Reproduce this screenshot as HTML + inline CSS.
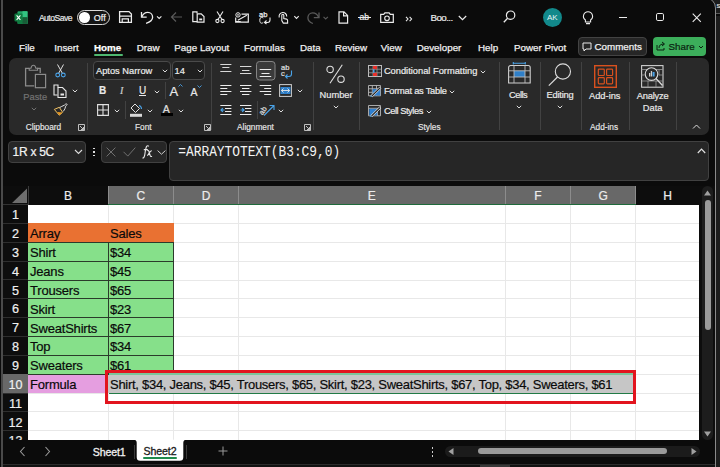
<!DOCTYPE html>
<html><head><meta charset="utf-8">
<style>
*{box-sizing:border-box;margin:0;padding:0}
html,body{width:720px;height:467px;overflow:hidden;background:#0b0b0b;font-family:"Liberation Sans",sans-serif}
.a{position:absolute}
.t{position:absolute;white-space:pre;line-height:1;color:#ececec;-webkit-text-stroke-width:0.2px}
#win{position:absolute;left:0;top:0;width:720px;height:467px;background:#0b0b0b;overflow:hidden}
.rib{left:9px;top:58px;width:700px;height:76.7px;background:#292929;border-radius:7px}
.sep{position:absolute;width:1px;background:#424242}
.lbl{font-size:8.3px;color:#e8e8e8;-webkit-text-stroke-width:0.15px}
.mn{font-size:9.8px;color:#f0f0f0;top:43px;-webkit-text-stroke-width:0.25px}
svg{position:absolute;overflow:visible}
.col{position:absolute;top:186px;height:18.5px;background:#0f0f0f;color:#e0e0e0;font-size:11px;text-align:center;line-height:19px}
.rowh{position:absolute;left:3px;width:25px;height:18.85px;color:#e0e0e0;font-size:12px;text-align:center;line-height:19px;border-bottom:1px solid #2d2d2d}
.cell{position:absolute;font-size:13px;letter-spacing:-0.2px;color:#0a0a0a;-webkit-text-stroke:0.2px #0a0a0a;line-height:18.85px;padding-left:2px;white-space:pre}
</style></head><body>
<div id="win">
<!-- left border -->
<!-- right side beyond window -->
<div class="a" style="left:705px;top:0;width:15px;height:467px;background:#1c1c1c"></div>
<div class="a" style="left:716px;top:13px;width:4px;height:1px;background:#5a5a5a"></div>
<div class="a" style="left:716px;top:14px;width:4px;height:2px;background:#0a0a0a"></div>
<div class="t" style="left:716.5px;top:1.5px;font-size:8px;color:#ddd">s</div>
<div class="a" style="left:-10px;top:-3px;width:726px;height:472px;border:1.2px solid #8a8a8a;border-radius:0 11px 0 0;background:#0b0b0b"></div>

<div class="a" style="left:1px;top:0;width:2px;height:467px;background:#4a4a4a"></div>
<!-- ===== TITLE BAR ===== -->
<!-- excel icon -->
<svg style="left:14px;top:10.5px" width="14" height="13" viewBox="0 0 14 13"><rect x="3.5" y="0.2" width="10" height="12.6" rx="1" fill="#21a366"/><rect x="8.5" y="0.2" width="5" height="12.6" fill="#33c481"/><rect x="3.5" y="6.3" width="10" height="6.5" fill="#107c41"/><rect x="8.5" y="6.3" width="5" height="6.5" fill="#185c37"/><rect x="0.5" y="2.6" width="8" height="8" rx="1" fill="#107c41"/><path d="M2.6 4.4l3.8 4.4 M6.4 4.4L2.6 8.8" stroke="#fff" stroke-width="1.1"/></svg>
<div class="t" style="left:38.9px;top:13.5px;font-size:8.6px;letter-spacing:-0.52px;color:#e8e8e8">AutoSave</div>
<div class="a" style="left:77px;top:9.7px;width:33px;height:15px;border:1px solid #d8d8d8;border-radius:8px;background:#151515"></div>
<div class="a" style="left:79.3px;top:12px;width:10.5px;height:10.5px;border-radius:50%;background:#fff"></div>
<div class="t" style="left:93.8px;top:13.5px;font-size:9px;color:#f0f0f0;-webkit-text-stroke:0.2px #f0f0f0">Off</div>
<!-- save -->
<svg style="left:118px;top:10px" width="15" height="14" viewBox="0 0 15 14"><path d="M1.6 1.6h9.4l2.4 2.4v8.4H1.6z" fill="none" stroke="#ececec" stroke-width="1.3"/><path d="M1.6 6.2h11.8 M4.2 12.4V8.9h6.2v3.5" fill="none" stroke="#ececec" stroke-width="1.2"/></svg>
<!-- undo -->
<svg style="left:140px;top:10px" width="24" height="14" viewBox="0 0 24 14"><path d="M1.5 2v5.2h5.2" fill="none" stroke="#ececec" stroke-width="1.3"/><path d="M1.8 6.9C3 4 5.2 2.3 7.8 2.3c3 0 4.8 2.4 4.8 5 0 2.6-2 4.6-6.5 6" fill="none" stroke="#ececec" stroke-width="1.3"/><path d="M17 6.3l2.2 2.2 2.2-2.2" fill="none" stroke="#ececec" stroke-width="1.1"/></svg>
<!-- back arrow dim -->
<svg style="left:169.5px;top:11px" width="13" height="12" viewBox="0 0 13 12"><path d="M12 6H1.5 M6 1.5L1.5 6 6 10.5" fill="none" stroke="#5a5a5a" stroke-width="1.2"/></svg>
<!-- copy doc icon -->
<svg style="left:191.5px;top:11px" width="13" height="12" viewBox="0 0 13 12"><path d="M5 2.2V0.8H0.8v9.8h4.2" fill="none" stroke="#ececec" stroke-width="1.2"/><path d="M5.2 2.8h4l2.8 2.8v5.6H5.2z" fill="none" stroke="#ececec" stroke-width="1.2"/><rect x="7.2" y="7.5" width="3" height="1.8" fill="#ececec"/></svg>
<!-- scissors -->
<svg style="left:215px;top:11px" width="10" height="12.5" viewBox="0 0 10 12.5"><path d="M2 0.5l5 8 M8 0.5l-5 8" fill="none" stroke="#ececec" stroke-width="1.1"/><circle cx="2.4" cy="10" r="1.6" fill="none" stroke="#ececec" stroke-width="1.1"/><circle cx="7.6" cy="10" r="1.6" fill="none" stroke="#ececec" stroke-width="1.1"/></svg>
<!-- envelope/sign -->
<svg style="left:234.5px;top:11.5px" width="14" height="11" viewBox="0 0 14 11"><path d="M6.5 2.2h6.8v8H0.7V5.5" fill="none" stroke="#ececec" stroke-width="1.2"/><path d="M2.8 8.2l9-5 M0.7 9.5h5" stroke="#ececec" stroke-width="1.1"/><circle cx="3" cy="2.9" r="2.2" fill="none" stroke="#ececec" stroke-width="1"/><circle cx="3" cy="2.9" r="0.8" fill="#ececec"/></svg>
<!-- ab spell -->
<div class="t" style="left:259px;top:11px;font-size:7.6px;color:#ececec;-webkit-text-stroke:0.25px #ececec">ab</div>
<svg style="left:258.5px;top:16.5px" width="12" height="7" viewBox="0 0 12 7"><path d="M4.2 1.2c-0.5-0.6-1-0.8-1.6-0.8C1.5 0.4 0.8 1.3 0.8 3.3s0.7 2.9 1.8 2.9c0.6 0 1.1-0.3 1.6-0.8" fill="none" stroke="#ececec" stroke-width="1"/><path d="M11 0.5v2.5c0 1.5-1 2.5-2.5 2.5H5.5 M7.5 3.5l-2 2 2 1.5" fill="none" stroke="#ececec" stroke-width="1.1"/></svg>
<!-- touch -->
<svg style="left:277.5px;top:11px" width="22" height="12.5" viewBox="0 0 22 12.5"><path d="M1.3 6.5a3.8 3.8 0 1 1 7.4-1" fill="none" stroke="#ececec" stroke-width="1.1"/><path d="M3.8 9.5V4.3a1 1 0 0 1 2 0v3.2l2.8 0.6c0.8 0.2 1 0.8 1 1.5v2.5H5.3z" fill="#0b0b0b" stroke="#ececec" stroke-width="1.1"/><path d="M16.3 5.2l2.2 2.2 2.2-2.2" fill="none" stroke="#ececec" stroke-width="1.1"/></svg>
<!-- redo dim -->
<svg style="left:307px;top:10.5px" width="23" height="13" viewBox="0 0 23 13"><path d="M12 1.5v5.2H6.8" fill="none" stroke="#5a5a5a" stroke-width="1.3"/><path d="M11.7 6.4C10.5 3.5 8.3 1.8 5.7 1.8c-3 0-4.8 2.4-4.8 5 0 2.6 2 4.6 5 5.7" fill="none" stroke="#5a5a5a" stroke-width="1.3"/><path d="M16.5 5.8l2.2 2.2 2.2-2.2" fill="none" stroke="#5a5a5a" stroke-width="1.1"/></svg>
<!-- new doc -->
<svg style="left:337.5px;top:10.5px" width="10.5" height="13" viewBox="0 0 10.5 13"><path d="M1 0.8h5l3.6 3.6v7.8H1z M5.6 0.8v4h4" fill="none" stroke="#ececec" stroke-width="1.2"/></svg>
<!-- strike ab -->
<div class="t" style="left:359.5px;top:13px;font-size:8.5px;color:#ececec;-webkit-text-stroke:0.2px #ececec">ab</div>
<div class="a" style="left:358px;top:17.2px;width:12.5px;height:1.1px;background:#ececec"></div>
<!-- camera -->
<svg style="left:379.5px;top:11.5px" width="14" height="11" viewBox="0 0 14 11"><path d="M0.7 2.4h3l1.2-1.6h4.2l1.2 1.6h3v7.9H0.7z" fill="none" stroke="#ececec" stroke-width="1.2"/><circle cx="7" cy="6.3" r="2.3" fill="none" stroke="#ececec" stroke-width="1.1"/></svg>
<svg style="left:404.5px;top:15.5px" width="8" height="6" viewBox="0 0 8 6"><path d="M1 0.8l2 2.2-2 2.2 M4.6 0.8l2 2.2-2 2.2" fill="none" stroke="#ececec" stroke-width="1.1"/></svg>
<div class="t" style="left:430.5px;top:13px;font-size:9.8px;color:#ececec;letter-spacing:-0.6px">Boo...</div>
<svg style="left:458px;top:14.5px" width="9" height="6" viewBox="0 0 9 6"><path d="M0.8 1l3.7 3.7L8.2 1" fill="none" stroke="#ececec" stroke-width="1.2"/></svg>
<!-- search -->
<svg style="left:503px;top:10px" width="13" height="13" viewBox="0 0 13 13"><circle cx="7.6" cy="5.2" r="4.2" fill="none" stroke="#ececec" stroke-width="1.2"/><path d="M4.6 8.2L0.8 12.2" stroke="#ececec" stroke-width="1.3"/></svg>
<!-- avatar -->
<div class="a" style="left:542.6px;top:8.2px;width:19.2px;height:19.2px;border-radius:50%;background:#12898b"></div>
<div class="t" style="left:547px;top:14px;font-size:8px;color:#e8f4f4;-webkit-text-stroke-width:0">AK</div>
<!-- bulb -->
<svg style="left:581.5px;top:10.5px" width="12" height="14" viewBox="0 0 12 14"><path d="M6 0.8a4.5 4.5 0 0 0-2.6 8.2v2h5.2v-2A4.5 4.5 0 0 0 6 0.8z M4 12.6h4" fill="none" stroke="#ececec" stroke-width="1.1"/></svg>
<!-- min max close -->
<div class="a" style="left:619.2px;top:16.5px;width:8.3px;height:1.2px;background:#ececec"></div>
<div class="a" style="left:655.8px;top:13.2px;width:8.4px;height:8.2px;border:1.15px solid #ececec;border-radius:1.8px"></div>
<svg style="left:692px;top:12.8px" width="9.5" height="9.5" viewBox="0 0 9.5 9.5"><path d="M0.7 0.7l8.1 8.1 M8.8 0.7L0.7 8.8" stroke="#ececec" stroke-width="1.1"/></svg>

<!-- ===== MENU ===== -->
<div class="t mn" style="left:19px">File</div>
<div class="t mn" style="left:54.3px">Insert</div>
<div class="t mn" style="left:94px;font-weight:bold;color:#fff">Home</div>
<div class="a" style="left:94px;top:53.5px;width:29px;height:2px;background:#4fb870;border-radius:1px"></div>
<div class="t mn" style="left:136.7px">Draw</div>
<div class="t mn" style="left:174.3px">Page Layout</div>
<div class="t mn" style="left:244px">Formulas</div>
<div class="t mn" style="left:300px">Data</div>
<div class="t mn" style="left:335px">Review</div>
<div class="t mn" style="left:380.7px">View</div>
<div class="t mn" style="left:416.7px">Developer</div>
<div class="t mn" style="left:478px">Help</div>
<div class="t mn" style="left:514px">Power Pivot</div>
<div class="a" style="left:578px;top:37px;width:69px;height:18.7px;background:#262626;border:1px solid #434343;border-radius:4px"></div>
<svg style="left:582px;top:41.5px" width="10" height="10" viewBox="0 0 10 10"><path d="M1 1h8v6H4L2 9V7H1z" fill="none" stroke="#e8e8e8" stroke-width="1"/></svg>
<div class="t mn" style="left:594.5px;top:42px">Comments</div>
<div class="a" style="left:653px;top:37px;width:53px;height:18.7px;background:#3cae5b;border-radius:4px"></div>
<svg style="left:656px;top:41px" width="10" height="10" viewBox="0 0 10 10"><path d="M1 4v5h7V7 M3 7c0-3 2-4 5-4 M6 1l2.5 2L6 5" fill="none" stroke="#0a2010" stroke-width="1"/></svg>
<div class="t mn" style="left:668.5px;top:42px;color:#0a1f0f;-webkit-text-stroke:0.2px #0a1f0f">Share</div>
<svg style="left:698px;top:45px" width="6" height="4" viewBox="0 0 6 4"><path d="M1 1l2 2 2-2" fill="none" stroke="#0a1f0f" stroke-width="1"/></svg>

<!-- ===== RIBBON ===== -->
<div class="a rib"></div>
<!--RIB-->
<!-- separators -->
<div class="sep" style="left:86.7px;top:63px;height:66.5px"></div>
<div class="sep" style="left:210.5px;top:63px;height:66.5px"></div>
<div class="sep" style="left:312.5px;top:62px;height:67.5px"></div>
<div class="sep" style="left:359px;top:62px;height:67.5px"></div>
<div class="sep" style="left:498.5px;top:62px;height:67.5px"></div>
<div class="sep" style="left:539.5px;top:62px;height:67.5px"></div>
<div class="sep" style="left:580.8px;top:62px;height:67.5px"></div>
<div class="sep" style="left:628.6px;top:62px;height:67.5px"></div>
<div class="sep" style="left:675.6px;top:62px;height:67.5px"></div>
<!-- group labels -->
<div class="t lbl" style="left:25.7px;top:122.5px">Clipboard</div>
<div class="t lbl" style="left:135px;top:122.5px">Font</div>
<div class="t lbl" style="left:237px;top:122.5px">Alignment</div>
<div class="t lbl" style="left:418px;top:122.5px">Styles</div>
<div class="t lbl" style="left:590px;top:122.5px">Add-ins</div>
<!-- launchers -->
<svg style="left:78px;top:123.5px" width="7" height="7" viewBox="0 0 7 7"><path d="M0.5 0.5h6v6h-6z M2 2l3.5 3.5 M5.5 3v2.5H3" fill="none" stroke="#cfcfcf" stroke-width="0.9"/></svg>
<svg style="left:204px;top:123.5px" width="7" height="7" viewBox="0 0 7 7"><path d="M0.5 0.5h6v6h-6z M2 2l3.5 3.5 M5.5 3v2.5H3" fill="none" stroke="#cfcfcf" stroke-width="0.9"/></svg>
<svg style="left:304px;top:123.5px" width="7" height="7" viewBox="0 0 7 7"><path d="M0.5 0.5h6v6h-6z M2 2l3.5 3.5 M5.5 3v2.5H3" fill="none" stroke="#cfcfcf" stroke-width="0.9"/></svg>
<svg style="left:692px;top:124px" width="9" height="5" viewBox="0 0 9 5"><path d="M1 4.5l3.5-3.5 3.5 3.5" fill="none" stroke="#dcdcdc" stroke-width="1"/></svg>

<!-- CLIPBOARD -->
<svg style="left:22px;top:62px" width="27" height="28" viewBox="22 62 27 28"><path d="M29 68.4H25.6V85.9h8.6 M37.2 68.4h3v4.6" fill="none" stroke="#8c8c8c" stroke-width="1.3"/><path d="M29.2 70.2V68.2h1.8c0.4-1.8 1.6-2.9 2.4-2.9s2 1.1 2.4 2.9h1.8v2z" fill="none" stroke="#8c8c8c" stroke-width="1.1"/><rect x="35.4" y="74.4" width="10.2" height="13.3" fill="none" stroke="#8c8c8c" stroke-width="1.2"/></svg>
<div class="t" style="left:23.3px;top:92.5px;font-size:9.3px;color:#747474">Paste</div>
<svg style="left:30.5px;top:107px" width="6" height="4" viewBox="0 0 6 4"><path d="M0.8 0.8l2.2 2.2 2.2-2.2" fill="none" stroke="#7a7a7a" stroke-width="0.9"/></svg>
<!-- scissors -->
<svg style="left:55px;top:64px" width="11" height="14" viewBox="0 0 11 14"><path d="M2.5 0.5l5 9 M8.5 0.5l-5 9" fill="none" stroke="#e0e0e0" stroke-width="1"/><circle cx="2.7" cy="11" r="1.9" fill="none" stroke="#4aa3e8" stroke-width="1.1"/><circle cx="8.3" cy="11" r="1.9" fill="none" stroke="#4aa3e8" stroke-width="1.1"/></svg>
<!-- copy -->
<svg style="left:53px;top:83.5px" width="14" height="14" viewBox="0 0 14 14"><path d="M5 3.5V1H1v10h3.5" fill="none" stroke="#e8e8e8" stroke-width="1.1"/><path d="M5 3.5h4.5L13 7v6.5H5z" fill="none" stroke="#e8e8e8" stroke-width="1.1"/><rect x="7.5" y="9.5" width="3.5" height="2" fill="#e8e8e8"/></svg>
<svg style="left:71.5px;top:89px" width="6" height="4" viewBox="0 0 6 4"><path d="M0.8 0.8l2.2 2.2 2.2-2.2" fill="none" stroke="#dcdcdc" stroke-width="1"/></svg>
<!-- format painter -->
<svg style="left:52px;top:102px" width="16" height="15" viewBox="52 102 16 15"><path d="M54.3 109.4L59.3 107.3 62.6 112.3 59.3 115.2z" fill="none" stroke="#f0c060" stroke-width="1"/><path d="M57.2 112L62.2 112.6 59.4 115z" fill="#f39c1e"/><path d="M59.6 107.6l2.2-1.2 2.6-1.2c0.6-0.4 1-1.2 1.6-1.4 0.6-0.2 1.2 0.4 1 1-0.2 0.6-1 0.8-1.3 1.4l-0.8 2.6-1.6 2.6" fill="none" stroke="#dedede" stroke-width="1"/></svg>
<!-- FONT -->
<div class="a" style="left:93.2px;top:61.4px;width:77.4px;height:18.2px;border:1px solid #4a4a4a;border-radius:4px;background:#1f1f1f"></div>
<div class="t" style="left:96px;top:67px;font-size:9.3px;color:#ececec">Aptos Narrow</div>
<svg style="left:162px;top:69px" width="6" height="4" viewBox="0 0 6 4"><path d="M0.8 0.8l2.2 2.2 2.2-2.2" fill="none" stroke="#dcdcdc" stroke-width="1"/></svg>
<div class="a" style="left:172.4px;top:61.4px;width:32.3px;height:18.2px;border:1px solid #4a4a4a;border-radius:4px;background:#1f1f1f"></div>
<div class="t" style="left:174.5px;top:67px;font-size:9.3px;color:#ececec">14</div>
<svg style="left:197px;top:69px" width="6" height="4" viewBox="0 0 6 4"><path d="M0.8 0.8l2.2 2.2 2.2-2.2" fill="none" stroke="#dcdcdc" stroke-width="1"/></svg>
<div class="t" style="left:99px;top:86px;font-size:10px;font-weight:bold;color:#e8e8e8">B</div>
<div class="t" style="left:120px;top:86px;font-size:10px;font-style:italic;font-family:'Liberation Serif',serif;color:#cfcfcf">I</div>
<div class="t" style="left:139px;top:85.5px;font-size:10px;color:#e8e8e8">U</div>
<div class="a" style="left:138.7px;top:94.5px;width:7.5px;height:1px;background:#e8e8e8"></div>
<svg style="left:154px;top:89.5px" width="6" height="4" viewBox="0 0 6 4"><path d="M0.8 0.8l2.2 2.2 2.2-2.2" fill="none" stroke="#dcdcdc" stroke-width="1"/></svg>
<div class="sep" style="left:164.5px;top:81.7px;height:17.5px"></div>
<div class="t" style="left:169.5px;top:84.5px;font-size:13px;color:#e8e8e8">A</div>
<svg style="left:178px;top:84px" width="5" height="3" viewBox="0 0 5 3"><path d="M0.5 2.5l2-2 2 2" fill="none" stroke="#4aa3e8" stroke-width="0.9"/></svg>
<div class="t" style="left:190.5px;top:86.5px;font-size:10.5px;color:#e8e8e8">A</div>
<svg style="left:197px;top:85px" width="5" height="3" viewBox="0 0 5 3"><path d="M0.5 0.5l2 2 2-2" fill="none" stroke="#4aa3e8" stroke-width="0.9"/></svg>
<!-- borders -->
<svg style="left:96.5px;top:104px" width="12" height="12" viewBox="0 0 12 12"><path d="M0.6 0.6h10.8v10.8H0.6z M6 0.6v10.8 M0.6 6h10.8" fill="none" stroke="#e0e0e0" stroke-width="1.1"/></svg>
<svg style="left:114px;top:109px" width="6" height="4" viewBox="0 0 6 4"><path d="M0.8 0.8l2.2 2.2 2.2-2.2" fill="none" stroke="#dcdcdc" stroke-width="1"/></svg>
<div class="sep" style="left:124.5px;top:100.8px;height:18.4px"></div>
<!-- fill -->
<svg style="left:130px;top:102.5px" width="13" height="14" viewBox="0 0 13 14"><path d="M5 1l4.5 4.5-4 4-4.5-4.5z" fill="none" stroke="#e0e0e0" stroke-width="1"/><path d="M9 2.5c1.5 0.5 2.5 2 2.5 3.5" fill="none" stroke="#4aa3e8" stroke-width="1.1"/><rect x="0" y="10.8" width="12" height="3" fill="#d8d8d8"/></svg>
<svg style="left:147px;top:109px" width="6" height="4" viewBox="0 0 6 4"><path d="M0.8 0.8l2.2 2.2 2.2-2.2" fill="none" stroke="#dcdcdc" stroke-width="1"/></svg>
<!-- font color -->
<div class="t" style="left:162.8px;top:103.5px;font-size:10.5px;color:#e0e0e0">A</div>
<div class="a" style="left:160.8px;top:113.3px;width:12px;height:3px;background:#000"></div>
<svg style="left:178px;top:109px" width="6" height="4" viewBox="0 0 6 4"><path d="M0.8 0.8l2.2 2.2 2.2-2.2" fill="none" stroke="#dcdcdc" stroke-width="1"/></svg>

<!-- ALIGNMENT -->
<svg style="left:219px;top:60px" width="60" height="60" viewBox="219 60 60 60">
<g stroke="#d8d8d8" stroke-width="1" fill="none">
<path d="M220.3 64.5h11.1 M222.3 67.5h7.1 M220.3 71.5h11.1"/>
<path d="M240 66.5h11.4 M242 70.5h7.4 M240 73.5h11.4"/>
</g>
<rect x="256.5" y="61.5" width="18.5" height="18.5" rx="3" fill="#3a3a3a" stroke="#858585" stroke-width="1"/>
<g stroke="#ececec" stroke-width="1" fill="none">
<path d="M259.7 69.5h11.5 M261.5 73.5h8 M259.7 76.5h11.5"/>
<path d="M220.3 85.5h11.1 M220.3 88.5h7 M220.3 91.5h11.1 M220.3 94.5h7"/>
<path d="M240 85.5h11.4 M242 88.5h7.4 M240 91.5h11.4 M242 94.5h7.4"/>
<path d="M259.7 85.5h11.5 M264.2 88.5h7 M259.7 91.5h11.5 M264.2 94.5h7"/>
<path d="M220.3 105.5h11.1 M225 108.5h6.4 M225 111.5h6.4 M220.3 114.5h11.1"/>
<path d="M240 105.5h11.4 M245 108.5h6.4 M245 111.5h6.4 M240 114.5h11.4"/>
</g>
<g stroke="#4aa3e8" stroke-width="1.2" fill="none">
<path d="M221 110h3.5 M222.8 108.2l-1.8 1.8 1.8 1.8"/>
<path d="M240.5 110h3.5 M242.2 108.2l1.8 1.8-1.8 1.8"/>
</g>
</svg>
<div class="t" style="left:281px;top:64px;font-size:7.5px;color:#e0e0e0">ab</div>
<div class="t" style="left:281px;top:70px;font-size:7.5px;color:#e0e0e0">c</div>
<svg style="left:284px;top:70px" width="9" height="8" viewBox="0 0 9 8"><path d="M7.5 0.5v3.5c0 1.5-1 2.5-2.5 2.5H1.5 M3.5 4.5l-2 2 2 2" fill="none" stroke="#4aa3e8" stroke-width="1.1"/></svg>
<!-- merge -->
<svg style="left:278.5px;top:83.5px" width="13" height="13" viewBox="0 0 13 13"><rect x="0.6" y="0.6" width="11.8" height="11.8" fill="none" stroke="#cfcfcf" stroke-width="1"/><rect x="1.5" y="3" width="10" height="7" fill="#2f7fc8"/><path d="M2.5 6.5h8 M4.5 4.5l-2 2 2 2 M8.5 4.5l2 2-2 2" fill="none" stroke="#e8e8e8" stroke-width="0.9"/></svg>
<svg style="left:297px;top:89px" width="6" height="4" viewBox="0 0 6 4"><path d="M0.8 0.8l2.2 2.2 2.2-2.2" fill="none" stroke="#dcdcdc" stroke-width="1"/></svg>
<div class="sep" style="left:256.5px;top:101px;height:18px"></div>
<!-- orientation -->
<div class="t" style="left:259px;top:104.5px;font-size:7.5px;color:#e0e0e0;transform:rotate(-55deg);transform-origin:6px 5px">ab</div>
<svg style="left:263px;top:103.5px" width="12" height="12" viewBox="0 0 12 12"><path d="M1 11.5l10-10 M6.5 1.5H11v4.5" fill="none" stroke="#4aa3e8" stroke-width="1.1"/></svg>
<svg style="left:277.5px;top:109px" width="6" height="4" viewBox="0 0 6 4"><path d="M0.8 0.8l2.2 2.2 2.2-2.2" fill="none" stroke="#dcdcdc" stroke-width="1"/></svg>

<!-- NUMBER -->
<svg style="left:325px;top:63px" width="22" height="22" viewBox="0 0 22 22"><circle cx="5.1" cy="6.4" r="3.2" fill="none" stroke="#e0e0e0" stroke-width="1.1"/><circle cx="16" cy="16.2" r="3.2" fill="none" stroke="#e0e0e0" stroke-width="1.1"/><path d="M17.3 1.8L5 20.2" stroke="#e0e0e0" stroke-width="1.1"/></svg>
<div class="t" style="left:319.5px;top:90.5px;font-size:9.3px;color:#e8e8e8">Number</div>
<svg style="left:332.5px;top:104.5px" width="6" height="4" viewBox="0 0 6 4"><path d="M0.8 0.8l2.2 2.2 2.2-2.2" fill="none" stroke="#dcdcdc" stroke-width="1"/></svg>

<!-- STYLES -->
<svg style="left:367.5px;top:64.5px" width="14" height="12" viewBox="0 0 14 12"><rect x="0.5" y="0.5" width="13" height="11" fill="none" stroke="#bdbdbd" stroke-width="1"/><path d="M0.5 4.2h13 M0.5 7.8h13 M5 0.5v11 M9 0.5v11" stroke="#9a9a9a" stroke-width="0.8"/><rect x="5" y="1" width="4" height="3.2" fill="#e8302a"/><rect x="5" y="7.8" width="4" height="3.2" fill="#e8302a"/><rect x="5" y="4.2" width="1.5" height="3.6" fill="#4aa3e8"/></svg>
<div class="t" style="left:383.9px;top:67px;font-size:9.3px;color:#ececec">Conditional Formatting</div>
<svg style="left:480px;top:69.5px" width="6" height="4" viewBox="0 0 6 4"><path d="M0.8 0.8l2.2 2.2 2.2-2.2" fill="none" stroke="#dcdcdc" stroke-width="1"/></svg>
<svg style="left:366px;top:84px" width="17" height="14" viewBox="366 84 17 14"><path d="M368.5 95.8V85.5h12v10.3z M368.5 88.8h12 M368.5 92.3h12 M372.3 85.5v10.3 M376.5 85.5v10.3" fill="none" stroke="#b8b8b8" stroke-width="0.9"/><path d="M372.6 89.1h7.6v6.4h-7.6z" fill="#2f80d0"/><path d="M371 95.5l8.6-8.4 1.3 1.3-8.6 8.4z" fill="#292929" stroke="#e6e6e6" stroke-width="0.8"/><path d="M370 96.8l1-1.6 1.2 1.2z" fill="#4aa3e8"/></svg>
<div class="t" style="left:383.9px;top:86.5px;font-size:9.3px;color:#ececec;letter-spacing:-0.25px">Format as Table</div>
<svg style="left:449px;top:89.5px" width="6" height="4" viewBox="0 0 6 4"><path d="M0.8 0.8l2.2 2.2 2.2-2.2" fill="none" stroke="#dcdcdc" stroke-width="1"/></svg>
<svg style="left:366px;top:104px" width="17" height="14" viewBox="366 104 17 14"><path d="M368.5 105.5h12v10.3h-12z M368.5 108.3h12 M377.5 108.3v7.5" fill="none" stroke="#b8b8b8" stroke-width="0.9"/><path d="M369.3 108.8h8v6.6h-8z" fill="#2f80d0"/><path d="M370.8 115.4l8.8-8.6 1.3 1.3-8.8 8.6z" fill="#292929" stroke="#e6e6e6" stroke-width="0.8"/><path d="M369.8 116.8l1-1.6 1.2 1.2z" fill="#4aa3e8"/></svg>
<div class="t" style="left:383.9px;top:106.5px;font-size:9.3px;color:#ececec;letter-spacing:-0.45px">Cell Styles</div>
<svg style="left:425.5px;top:109.5px" width="6" height="4" viewBox="0 0 6 4"><path d="M0.8 0.8l2.2 2.2 2.2-2.2" fill="none" stroke="#dcdcdc" stroke-width="1"/></svg>

<!-- CELLS -->
<svg style="left:507.5px;top:62px" width="24" height="22" viewBox="0 0 24 22"><path d="M5.3 1.2h12 M5.3 0v2.4 M17.3 0v2.4" stroke="#4aa3e8" stroke-width="1.1"/><path d="M0.6 21V5.5a2 2 0 0 1 2-2h17.6a2 2 0 0 1 2 2V21z" fill="none" stroke="#cfcfcf" stroke-width="1.1"/><rect x="6" y="8.8" width="11" height="6.2" fill="#2f7fc8"/><path d="M0.6 8.8h21.6 M0.6 15h21.6 M6 3.5V21 M17 3.5V21" stroke="#bdbdbd" stroke-width="0.9"/></svg>
<div class="t" style="left:509px;top:90.5px;font-size:9.3px;color:#e8e8e8;letter-spacing:-0.5px">Cells</div>
<svg style="left:516px;top:104.5px" width="6" height="4" viewBox="0 0 6 4"><path d="M0.8 0.8l2.2 2.2 2.2-2.2" fill="none" stroke="#dcdcdc" stroke-width="1"/></svg>
<!-- EDITING -->
<svg style="left:547px;top:62px" width="26" height="26" viewBox="0 0 26 26"><circle cx="15.9" cy="9.5" r="7.6" fill="none" stroke="#dcdcdc" stroke-width="1.1"/><path d="M10.5 15L1.8 23.6" stroke="#dcdcdc" stroke-width="1.2"/></svg>
<div class="t" style="left:546.5px;top:90.5px;font-size:9.3px;color:#e8e8e8;letter-spacing:-0.2px">Editing</div>
<svg style="left:557px;top:104.5px" width="6" height="4" viewBox="0 0 6 4"><path d="M0.8 0.8l2.2 2.2 2.2-2.2" fill="none" stroke="#dcdcdc" stroke-width="1"/></svg>
<!-- ADD-INS -->
<svg style="left:593.5px;top:64.5px" width="23" height="23" viewBox="0 0 23 23"><rect x="0.7" y="0.7" width="21.6" height="21.6" fill="none" stroke="#d9511e" stroke-width="1.4"/><g fill="none" stroke="#d9511e" stroke-width="1.2"><rect x="4.3" y="4.2" width="6" height="6.3" rx="0.8"/><rect x="12.6" y="4.2" width="6" height="6.3" rx="0.8"/><rect x="4.3" y="12.6" width="6" height="6.3" rx="0.8"/><rect x="12.6" y="12.6" width="6" height="6.3" rx="0.8"/></g></svg>
<div class="t" style="left:589px;top:91.5px;font-size:9.3px;color:#e8e8e8">Add-ins</div>
<!-- ANALYZE -->
<svg style="left:641px;top:64.5px" width="24" height="24" viewBox="0 0 24 24"><rect x="0.6" y="0.6" width="21.4" height="21.6" fill="none" stroke="#cfcfcf" stroke-width="1.1"/><path d="M0.6 4.5h21.4 M0.6 10h3 M18 10h4 M0.6 16h21.4 M7 16v6 M15 16v6 M18 4.5v6" stroke="#9a9a9a" stroke-width="0.8"/><circle cx="10.5" cy="9.1" r="6.3" fill="#292929" stroke="#dcdcdc" stroke-width="1.1"/><path d="M15 13.5l6.5 7" stroke="#dcdcdc" stroke-width="1.3"/><rect x="8" y="8" width="1.3" height="3.5" fill="#cfcfcf"/><rect x="9.8" y="6" width="1.3" height="5.5" fill="#cfcfcf"/><rect x="11.6" y="7" width="2" height="4.5" fill="#4aa3e8"/></svg>
<div class="t" style="left:636.7px;top:91.5px;font-size:9.3px;color:#e8e8e8;letter-spacing:-0.2px">Analyze</div>
<div class="t" style="left:642.8px;top:103.5px;font-size:9.3px;color:#e8e8e8">Data</div>

<!--/RIB-->

<!-- ===== FORMULA BAR ===== -->
<div class="a" style="left:8.3px;top:141px;width:77.3px;height:21.5px;background:#262626;border:1px solid #414141;border-radius:4px"></div>
<div class="t" style="left:12.6px;top:146.2px;font-size:12px;letter-spacing:-0.28px;color:#f2f2f2">1R x 5C</div>
<svg style="left:74px;top:149px" width="9" height="6" viewBox="0 0 9 6"><path d="M1 1l3.5 3.5L8 1" fill="none" stroke="#ddd" stroke-width="1.1"/></svg>
<div class="a" style="left:93px;top:147.5px;width:1.5px;height:1.5px;background:#ddd"></div>
<div class="a" style="left:93px;top:151px;width:1.5px;height:1.5px;background:#ddd"></div>
<div class="a" style="left:93px;top:154.5px;width:1.5px;height:1.5px;background:#ddd"></div>
<div class="a" style="left:101.4px;top:141px;width:65.3px;height:21.5px;background:#262626;border:1px solid #414141;border-radius:4px"></div>
<svg style="left:105.5px;top:146.5px" width="10" height="10" viewBox="0 0 10 10"><path d="M0.6 0.6l8.8 8.8 M9.4 0.6L0.6 9.4" stroke="#707070" stroke-width="1"/></svg>
<svg style="left:122.8px;top:146.8px" width="13" height="10" viewBox="0 0 13 10"><path d="M0.5 4.8l4.3 4.3L12.3 0.6" fill="none" stroke="#707070" stroke-width="1"/></svg>
<svg style="left:139.8px;top:145px" width="13" height="14" viewBox="0 0 13 14"><path d="M8.8 1.4C8.2 0.6 7.2 0.6 6.6 1.4 5.9 2.4 5.3 6 4.8 9.6 4.3 12.6 3.6 13.2 2.4 13 M3.8 4.6h4" fill="none" stroke="#e6e6e6" stroke-width="1.1"/><path d="M7.2 5.4c0.8-0.3 1.4 0 1.7 1l1.3 4.2c0.3 1 0.9 1.2 1.8 0.6 M11.6 5.6c-1.2 0.6-2.8 2.6-4.2 5.2" fill="none" stroke="#e6e6e6" stroke-width="1.1"/></svg>
<svg style="left:156.8px;top:149.5px" width="9" height="5" viewBox="0 0 9 5"><path d="M0.6 0.6l3.9 3.6 3.9-3.6" fill="none" stroke="#cfcfcf" stroke-width="1"/></svg>
<div class="a" style="left:169.3px;top:140.7px;width:539.6px;height:40.8px;background:#262626;border:1px solid #414141;border-radius:4px"></div>
<div class="t" style="left:178.3px;top:147px;font-family:'Liberation Mono',monospace;font-size:12.85px;color:#f4f4f4;-webkit-text-stroke-width:0;transform:scaleY(1.12);transform-origin:0 50%">=ARRAYTOTEXT(B3:C9,0)</div>
<svg style="left:697.3px;top:147.8px" width="9" height="6" viewBox="0 0 9 6"><path d="M0.8 5l3.7-3.8L8.2 5" fill="none" stroke="#e0e0e0" stroke-width="1.2"/></svg>

<!-- ===== GRID ===== -->
<!--GRID-->
<div class="a" style="left:3px;top:186.3px;width:697px;height:18.3px;background:#0d0d0d"></div>
<div class="a" style="left:108px;top:186.3px;width:527.70px;height:18.3px;background:#686868"></div>
<div class="a" style="left:27.50px;top:186.3px;width:1px;height:18.3px;background:#3a3a3a"></div>
<div class="a" style="left:107.50px;top:186.3px;width:1px;height:18.3px;background:#8c8c8c"></div>
<div class="a" style="left:173.00px;top:186.3px;width:1px;height:18.3px;background:#8c8c8c"></div>
<div class="a" style="left:238.00px;top:186.3px;width:1px;height:18.3px;background:#8c8c8c"></div>
<div class="a" style="left:504.50px;top:186.3px;width:1px;height:18.3px;background:#8c8c8c"></div>
<div class="a" style="left:570.20px;top:186.3px;width:1px;height:18.3px;background:#8c8c8c"></div>
<div class="a" style="left:635.20px;top:186.3px;width:1px;height:18.3px;background:#8c8c8c"></div>
<div class="t" style="left:58.00px;width:20px;text-align:center;top:190.3px;font-size:12px;color:#ececec">B</div>
<div class="t" style="left:130.75px;width:20px;text-align:center;top:190.3px;font-size:12px;color:#ececec">C</div>
<div class="t" style="left:196.00px;width:20px;text-align:center;top:190.3px;font-size:12px;color:#ececec">D</div>
<div class="t" style="left:361.75px;width:20px;text-align:center;top:190.3px;font-size:12px;color:#ececec">E</div>
<div class="t" style="left:527.85px;width:20px;text-align:center;top:190.3px;font-size:12px;color:#ececec">F</div>
<div class="t" style="left:593.20px;width:20px;text-align:center;top:190.3px;font-size:12px;color:#ececec">G</div>
<div class="t" style="left:657.50px;width:20px;text-align:center;top:190.3px;font-size:12px;color:#ececec">H</div>
<div class="a" style="left:108px;top:203.5px;width:527.70px;height:1.5px;background:#1f6a3b"></div>
<div class="a" style="left:3px;top:203.8px;width:25px;height:1px;background:#333"></div>
<svg style="left:0;top:0" width="30" height="210"><path d="M27 188.5V203H12z" fill="#6e6e6e"/></svg>
<div class="a" style="left:28px;top:204.6px;width:671.30px;height:235.10px;background:#fff;overflow:hidden" id="g"></div>
<div class="a" style="left:107.50px;top:204.6px;width:1px;height:235.10px;background:#e8e8e8"></div>
<div class="a" style="left:173.00px;top:204.6px;width:1px;height:235.10px;background:#e8e8e8"></div>
<div class="a" style="left:238.00px;top:204.6px;width:1px;height:235.10px;background:#e8e8e8"></div>
<div class="a" style="left:504.50px;top:204.6px;width:1px;height:235.10px;background:#e8e8e8"></div>
<div class="a" style="left:570.20px;top:204.6px;width:1px;height:235.10px;background:#e8e8e8"></div>
<div class="a" style="left:635.20px;top:204.6px;width:1px;height:235.10px;background:#e8e8e8"></div>
<div class="a" style="left:3px;top:204.6px;width:25px;height:235.10px;background:#0d0d0d;overflow:hidden" id="rh">
<div class="a" style="left:0;top:0.00px;width:25px;height:18.85px;"></div>
<div class="a" style="left:0;top:18.35px;width:25px;height:1px;background:#2e2e2e"></div>
<div class="t" style="left:0;width:25px;text-align:center;top:4.60px;font-size:12.6px;color:#f0f0f0">1</div>
<div class="a" style="left:0;top:18.85px;width:25px;height:18.85px;"></div>
<div class="a" style="left:0;top:37.20px;width:25px;height:1px;background:#2e2e2e"></div>
<div class="t" style="left:0;width:25px;text-align:center;top:23.45px;font-size:12.6px;color:#f0f0f0">2</div>
<div class="a" style="left:0;top:37.70px;width:25px;height:18.85px;"></div>
<div class="a" style="left:0;top:56.05px;width:25px;height:1px;background:#2e2e2e"></div>
<div class="t" style="left:0;width:25px;text-align:center;top:42.30px;font-size:12.6px;color:#f0f0f0">3</div>
<div class="a" style="left:0;top:56.55px;width:25px;height:18.85px;"></div>
<div class="a" style="left:0;top:74.90px;width:25px;height:1px;background:#2e2e2e"></div>
<div class="t" style="left:0;width:25px;text-align:center;top:61.15px;font-size:12.6px;color:#f0f0f0">4</div>
<div class="a" style="left:0;top:75.40px;width:25px;height:18.85px;"></div>
<div class="a" style="left:0;top:93.75px;width:25px;height:1px;background:#2e2e2e"></div>
<div class="t" style="left:0;width:25px;text-align:center;top:80.00px;font-size:12.6px;color:#f0f0f0">5</div>
<div class="a" style="left:0;top:94.25px;width:25px;height:18.85px;"></div>
<div class="a" style="left:0;top:112.60px;width:25px;height:1px;background:#2e2e2e"></div>
<div class="t" style="left:0;width:25px;text-align:center;top:98.85px;font-size:12.6px;color:#f0f0f0">6</div>
<div class="a" style="left:0;top:113.10px;width:25px;height:18.85px;"></div>
<div class="a" style="left:0;top:131.45px;width:25px;height:1px;background:#2e2e2e"></div>
<div class="t" style="left:0;width:25px;text-align:center;top:117.70px;font-size:12.6px;color:#f0f0f0">7</div>
<div class="a" style="left:0;top:131.95px;width:25px;height:18.85px;"></div>
<div class="a" style="left:0;top:150.30px;width:25px;height:1px;background:#2e2e2e"></div>
<div class="t" style="left:0;width:25px;text-align:center;top:136.55px;font-size:12.6px;color:#f0f0f0">8</div>
<div class="a" style="left:0;top:150.80px;width:25px;height:18.85px;"></div>
<div class="a" style="left:0;top:169.15px;width:25px;height:1px;background:#2e2e2e"></div>
<div class="t" style="left:0;width:25px;text-align:center;top:155.40px;font-size:12.6px;color:#f0f0f0">9</div>
<div class="a" style="left:0;top:169.65px;width:25px;height:18.85px;background:#686868;"></div>
<div class="a" style="left:0;top:188.00px;width:25px;height:1px;background:#2e2e2e"></div>
<div class="t" style="left:0;width:25px;text-align:center;top:174.25px;font-size:12.6px;color:#f0f0f0">10</div>
<div class="a" style="left:0;top:188.50px;width:25px;height:18.85px;"></div>
<div class="a" style="left:0;top:206.85px;width:25px;height:1px;background:#2e2e2e"></div>
<div class="t" style="left:0;width:25px;text-align:center;top:193.10px;font-size:12.6px;color:#f0f0f0">11</div>
<div class="a" style="left:0;top:207.35px;width:25px;height:18.85px;"></div>
<div class="a" style="left:0;top:225.70px;width:25px;height:1px;background:#2e2e2e"></div>
<div class="t" style="left:0;width:25px;text-align:center;top:211.95px;font-size:12.6px;color:#f0f0f0">12</div>
<div class="a" style="left:0;top:226.20px;width:25px;height:18.85px;"></div>
<div class="a" style="left:0;top:244.55px;width:25px;height:1px;background:#2e2e2e"></div>
<div class="t" style="left:0;width:25px;text-align:center;top:230.80px;font-size:12.6px;color:#f0f0f0">13</div>
</div>
<div class="a" style="left:28px;top:0;width:671.3px;height:439.7px;overflow:hidden">
<div class="a" style="left:0;top:222.95px;width:672px;height:1px;background:#e8e8e8"></div>
<div class="a" style="left:0;top:241.80px;width:672px;height:1px;background:#e8e8e8"></div>
<div class="a" style="left:0;top:260.65px;width:672px;height:1px;background:#e8e8e8"></div>
<div class="a" style="left:0;top:279.50px;width:672px;height:1px;background:#e8e8e8"></div>
<div class="a" style="left:0;top:298.35px;width:672px;height:1px;background:#e8e8e8"></div>
<div class="a" style="left:0;top:317.20px;width:672px;height:1px;background:#e8e8e8"></div>
<div class="a" style="left:0;top:336.05px;width:672px;height:1px;background:#e8e8e8"></div>
<div class="a" style="left:0;top:354.90px;width:672px;height:1px;background:#e8e8e8"></div>
<div class="a" style="left:0;top:373.75px;width:672px;height:1px;background:#e8e8e8"></div>
<div class="a" style="left:0;top:392.60px;width:672px;height:1px;background:#e8e8e8"></div>
<div class="a" style="left:0;top:411.45px;width:672px;height:1px;background:#e8e8e8"></div>
<div class="a" style="left:0;top:430.30px;width:672px;height:1px;background:#e8e8e8"></div>
</div>
<div class="a" style="left:28.00px;top:223.45px;width:145.50px;height:18.85px;background:#e97132"></div>
<div class="a" style="left:28.00px;top:242.30px;width:145.50px;height:131.95px;background:#86e08a"></div>
<div class="a" style="left:28.00px;top:374.25px;width:80.00px;height:18.85px;background:#e59ee0"></div>
<div class="a" style="left:108.00px;top:374.25px;width:527.70px;height:18.85px;background:#c6c6c6"></div>
<div class="a" style="left:28px;top:241.80px;width:145.50px;height:1px;background:#2b3b2b"></div>
<div class="a" style="left:28px;top:260.65px;width:145.50px;height:1px;background:#2b3b2b"></div>
<div class="a" style="left:28px;top:279.50px;width:145.50px;height:1px;background:#2b3b2b"></div>
<div class="a" style="left:28px;top:298.35px;width:145.50px;height:1px;background:#2b3b2b"></div>
<div class="a" style="left:28px;top:317.20px;width:145.50px;height:1px;background:#2b3b2b"></div>
<div class="a" style="left:28px;top:336.05px;width:145.50px;height:1px;background:#2b3b2b"></div>
<div class="a" style="left:28px;top:354.90px;width:145.50px;height:1px;background:#2b3b2b"></div>
<div class="a" style="left:28px;top:373.75px;width:145.50px;height:1px;background:#2b3b2b"></div>
<div class="a" style="left:107.50px;top:242.30px;width:1px;height:131.95px;background:#2b3b2b"></div>
<div class="a" style="left:173.00px;top:242.30px;width:1px;height:131.95px;background:#2b3b2b"></div>
<div class="cell" style="left:28px;top:225.35px">Array</div>
<div class="cell" style="left:108px;top:225.35px">Sales</div>
<div class="cell" style="left:28px;top:244.20px">Shirt</div>
<div class="cell" style="left:108px;top:244.20px">$34</div>
<div class="cell" style="left:28px;top:263.05px">Jeans</div>
<div class="cell" style="left:108px;top:263.05px">$45</div>
<div class="cell" style="left:28px;top:281.90px">Trousers</div>
<div class="cell" style="left:108px;top:281.90px">$65</div>
<div class="cell" style="left:28px;top:300.75px">Skirt</div>
<div class="cell" style="left:108px;top:300.75px">$23</div>
<div class="cell" style="left:28px;top:319.60px">SweatShirts</div>
<div class="cell" style="left:108px;top:319.60px">$67</div>
<div class="cell" style="left:28px;top:338.45px">Top</div>
<div class="cell" style="left:108px;top:338.45px">$34</div>
<div class="cell" style="left:28px;top:357.30px">Sweaters</div>
<div class="cell" style="left:108px;top:357.30px">$61</div>
<div class="cell" style="left:28px;top:376.15px">Formula</div>
<div class="cell" style="left:108px;top:375.85px;letter-spacing:-0.28px">Shirt, $34, Jeans, $45, Trousers, $65, Skirt, $23, SweatShirts, $67, Top, $34, Sweaters, $61</div>
<div class="a" style="left:108.50px;top:373px;width:525px;height:1.7px;background:#7cc49a"></div>
<div class="a" style="left:108.50px;top:392.7px;width:525px;height:1.3px;background:#217a45"></div>
<div class="a" style="left:633px;top:373px;width:1px;height:21px;background:#9fd4b8"></div>
<div class="a" style="left:105.2px;top:370.3px;width:531.1px;height:33.3px;border:3px solid #e2141e"></div>
<div class="a" style="left:700px;top:186px;width:15px;height:254px;background:#0d0d0d"></div>
<div class="a" style="left:702px;top:186px;width:11px;height:254px;background:#1d1d1d;border-radius:6px"></div>
<svg style="left:703px;top:189px" width="9" height="8"><path d="M4.5 1.5L8 6.5H1z" fill="#a0a0a0"/></svg>
<div class="a" style="left:704.5px;top:200px;width:6px;height:130px;background:#9a9a9a;border-radius:3px"></div>
<svg style="left:703px;top:430px" width="9" height="8"><path d="M4.5 6.5L8 1.5H1z" fill="#a0a0a0"/></svg>
<!--/GRID-->
<!-- ===== SHEET TABS ===== -->
<!--TABS-->
<!-- bottom bar -->
<div class="a" style="left:3px;top:439.7px;width:712px;height:27.3px;background:#0b0b0b"></div>
<svg style="left:19px;top:446px" width="7" height="11" viewBox="0 0 7 11"><path d="M5.5 1L1.5 5.5 5.5 10" fill="none" stroke="#9a9a9a" stroke-width="1.1"/></svg>
<svg style="left:44px;top:446px" width="7" height="11" viewBox="0 0 7 11"><path d="M1.5 1l4 4.5-4 4.5" fill="none" stroke="#9a9a9a" stroke-width="1.1"/></svg>
<div class="t" style="left:92.8px;top:447px;font-size:10.6px;color:#f0f0f0;-webkit-text-stroke-width:0.3px;letter-spacing:-0.15px">Sheet1</div>
<div class="a" style="left:133.8px;top:445px;width:1px;height:14px;background:#3a3a3a"></div>
<!-- active tab -->
<svg style="left:130px;top:439px" width="60" height="23" viewBox="130 439 60 23"><path d="M133.7 439.7a3 3 0 0 1 3 3V457.2a3.5 3.5 0 0 0 3.5 3.5h39.6a3.5 3.5 0 0 0 3.5-3.5V442.7a3 3 0 0 1 3-3z" fill="#ffffff"/></svg>
<div class="t" style="left:143.5px;top:445.8px;font-size:10.6px;color:#1a1a1a;-webkit-text-stroke-width:0.3px;letter-spacing:-0.1px">Sheet2</div>
<div class="a" style="left:143.3px;top:457px;width:33.4px;height:1.8px;background:#1f8a4c;border-radius:1px"></div>
<div class="a" style="left:185.6px;top:445px;width:1px;height:14px;background:#3a3a3a"></div>
<svg style="left:217.5px;top:446px" width="10" height="10" viewBox="0 0 10 10"><path d="M5 0.5v9 M0.5 5h9" stroke="#9a9a9a" stroke-width="1"/></svg>
<!-- dots -->
<div class="a" style="left:431.8px;top:447px;width:1.5px;height:1.5px;background:#ccc"></div>
<div class="a" style="left:431.8px;top:451px;width:1.5px;height:1.5px;background:#ccc"></div>
<div class="a" style="left:431.8px;top:455px;width:1.5px;height:1.5px;background:#ccc"></div>
<!-- h scrollbar -->
<div class="a" style="left:445px;top:445.8px;width:255px;height:11.2px;background:#1b1b1b;border-radius:6px"></div>
<svg style="left:447px;top:447px" width="8" height="9" viewBox="0 0 8 9"><path d="M1.5 4.5L6.5 1v7z" fill="#a0a0a0"/></svg>
<div class="a" style="left:478.3px;top:448px;width:188.4px;height:6px;background:#9a9a9a;border-radius:3px"></div>
<svg style="left:690px;top:447px" width="8" height="9" viewBox="0 0 8 9"><path d="M6.5 4.5L1.5 1v7z" fill="#a0a0a0"/></svg>
<div class="a" style="left:3px;top:463.8px;width:712px;height:4px;background:#121212;border-top:1px solid #2c2c2c"></div>
<div class="a" style="left:480px;top:464.5px;width:30px;height:3px;background:#383838"></div>

<!--/TABS-->
</div>
</body></html>
